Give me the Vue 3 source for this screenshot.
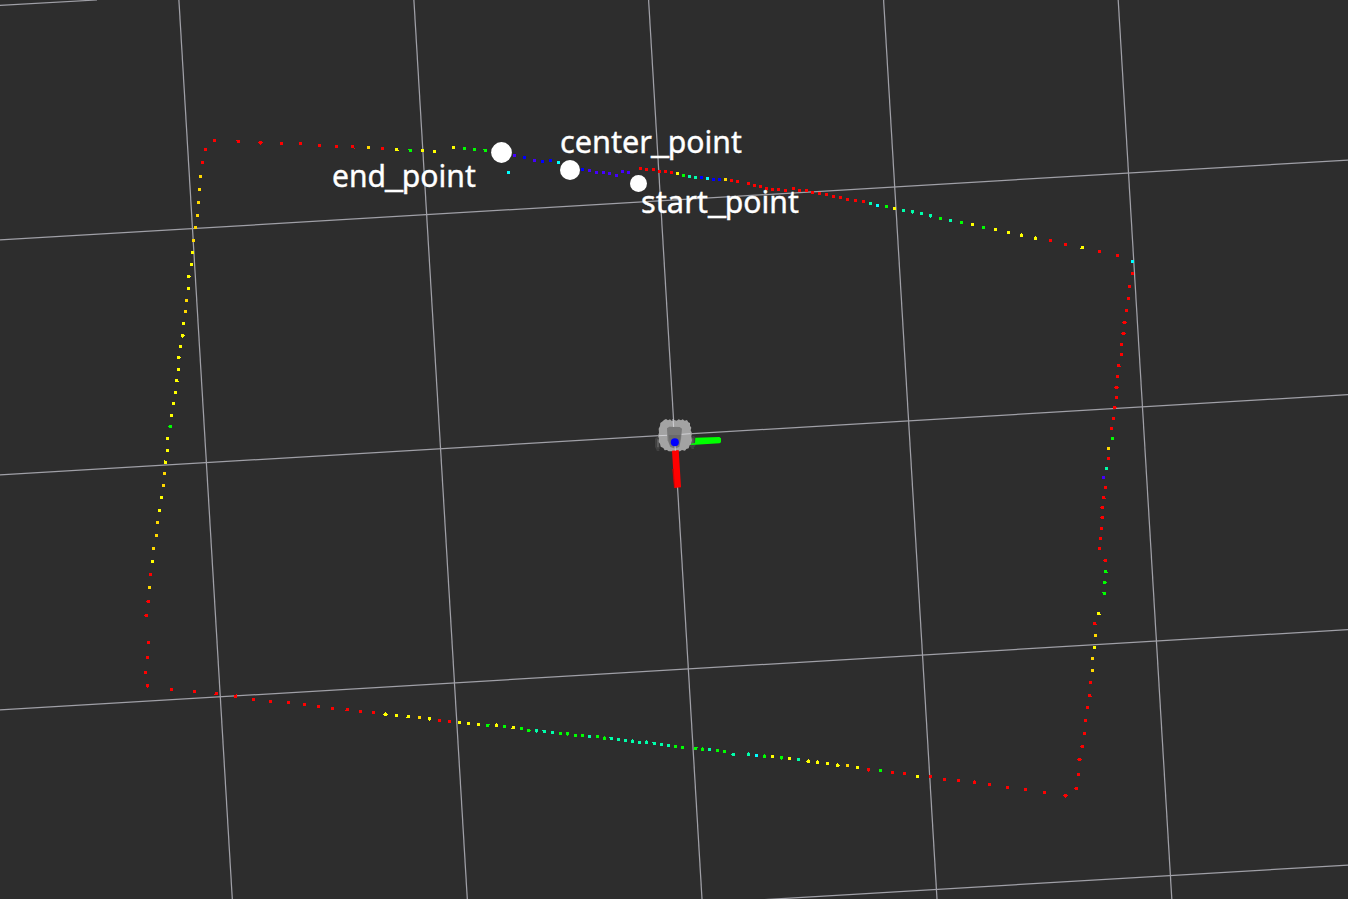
<script setup>
const scan = {
  red: '214,140 205,149 202,162 238,141 260,142 281,143 300,143 319,145 336,146 352,146 382,148 640,168 646,169 653,169 659,171 665,171 671,172 731,180 737,181 748,183 754,185 760,186 766,188 772,189 778,189 785,190 793,188 799,190 806,190 812,192 819,193 826,194 833,196 840,197 847,199 855,200 863,201 1050,240 1065,244 1099,251 1117,255 1132,273 1129,286 1128,298 1126,310 1124,322 1123,333 1121,344 1121,354 1118,365 1117,376 1116,387 1116,397 1114,407 1113,418 1111,428 1108,458 1105,487 1103,497 1102,507 1102,517 1101,528 1100,538 1099,548 1105,560 1094,623 1090,682 1089,695 1087,707 1085,720 1084,733 1082,746 1079,759 1078,774 1076,788 1065,795 1044,792 150,574 148,601 146,615 148,642 147,657 145,672 147,685 171,689 194,691 216,693 235,696 253,699 270,701 288,702 304,704 318,706 332,708 347,709 360,711 373,712 439,720 449,721 868,769 892,772 904,773 930,776 944,779 958,780 974,782 989,784 1007,787 1025,789',
  amber: '200,176 199,189 198,202 197,215 195,227 193,240 186,300 185,311 725,179 1108,448 1095,635 1092,658 1092,670 164,473 163,485 157,522 156,535 153,548 149,587 419,717 847,765 368,147',
  yellow: '192,252 191,264 188,276 188,288 183,323 182,335 180,346 178,357 178,369 176,380 175,392 173,403 171,415 167,438 167,450 165,462 161,497 159,510 152,561 396,149 422,150 434,151 453,147 677,173 894,208 972,224 995,229 1008,232 1021,235 1035,238 1082,247 1098,613 1094,647 385,714 396,715 408,716 429,718 459,722 468,723 478,724 496,725 513,727 772,756 789,758 808,761 817,762 827,763 837,765 857,767 917,776',
  green: '410,150 464,148 474,149 485,150 683,175 886,206 940,218 961,222 983,227 1112,438 1105,571 1104,582 1104,593 170,426 487,725 504,726 521,728 528,730 560,733 567,733 575,735 582,735 597,736 604,738 675,746 682,747 695,748 702,749 717,750 724,751 764,756 781,757 880,770',
  teal: '689,176 695,177 870,203 903,210 912,211 921,213 930,215 950,220 1106,468 536,730 544,731 552,732 589,736 611,738 618,739 625,740 632,741 639,742 646,742 654,743 661,744 668,745 709,749 733,754 748,754 798,759',
  cyan: '558,162 508,172 707,178 877,205 1132,261 756,755',
  blue: '524,157 542,161 550,160 582,169 701,177 713,179 719,179',
  violet: '514,155 534,160 589,170 596,172 603,172 609,173 616,175 622,171 628,172 1103,477'
}
// pixels beside a point where two overlapping echoes widen it
const echoes = {
  red: '236,140 258,142 262,142 260,144 354,148 206,148 1122,322 1126,322 1121,333 1125,333 1120,366 1114,387 1118,387 1116,407 1105,498 1100,507 1100,517 1103,560 1096,624 1091,696 1086,721 1080,746 1077,759 1081,759 1074,788 1063,795 1067,795 1065,797 146,601 144,615 147,687 214,694 236,694 345,710 974,780 868,771',
  yellow: '190,276 184,335 182,337 180,357 178,381 164,460 398,150 383,714 387,714 385,712 406,717 429,720 496,723 511,728 806,761 808,759 817,760 837,763 839,765 1021,233 1035,236 1080,248 1100,614',
  green: '408,149 483,149 168,426 1107,572 1106,582 1102,592 489,724 530,730 567,735 604,736 697,747 702,747 764,754 781,759',
  teal: '912,213 930,217 536,732 542,730 609,737 632,739 646,740 652,742 731,754 748,752'
}
const cells = (list, size) => list.split(' ').map((p) => {
  const [x, y] = p.split(',')
  const o = size === 3 ? 1 : 0
  return `M${x - o} ${y - o}h${size}v${size}h-${size}z`
}).join('')
const layers = Object.entries(scan).map(([name, list]) => ({
  name,
  d: cells(list, 3) + (echoes[name] ? cells(echoes[name], 1) : '')
}))
const grid = [
  [0, 5.3, 97, 0], [0, 240, 1348, 160], [0, 475, 1348, 394.6], [0, 710, 1348, 629.6], [0, 945, 1348, 865],
  [178.9, 0, 232.3, 899], [413.9, 0, 467.3, 899], [648.6, 0, 702, 899], [883.6, 0, 937, 899], [1118.2, 0, 1171.8, 899]
]
const labels = [
  { y: 187, parts: [['end', 332, 54], ['_', 385, 18], ['point', 401.8, 74]] },
  { y: 153.3, parts: [['center', 560, 92], ['_', 651, 18], ['point', 667.8, 74]] },
  { y: 213, parts: [['start', 641, 67], ['_', 708, 18], ['point', 724.8, 74]] }
]
</script>

<template>
  <main class="viewport">
    <svg class="scene" width="1348" height="899" viewBox="0 0 1348 899">
      <g class="grid">
        <line v-for="(l, i) in grid" :key="i" :x1="l[0]" :y1="l[1]" :x2="l[2]" :y2="l[3]" />
      </g>
      <g shape-rendering="crispEdges">
        <path v-for="l in layers" :key="l.name" :class="l.name" :d="l.d" />
      </g>
      <g transform="translate(640 405) scale(.33333)">
        <path class="wheel" d="M45 101l7-6 7 3v34l-10 2-4-9zM151 96l11-4 5 8-1 24-10 5-6-4z" />
        <path class="hub" d="M51 103h6v24h-6zM155 100h6v20h-6z" />
        <path class="wheel" d="M50 133h8v5h-8zM154 127h8v5h-8z" />
        <path class="green" d="M145 117l20-3 1-16 72-2 5 4v12l-4 3-73 4-23 1z" />
        <path class="body" d="M72 45l6-3 6 4 6-3 6 5 7-3 7 2 6-4 7 3 5-3 6 4 7-2 4 7 5 2v8l4 6-2 8 4 9-2 9 2 12-3 12-4 3-3 9-7 2-4 5-9-2-6 4H86l-5-4-7 1-4-7-8-4-2-9-4-5 1-10-3-9 3-9-1-12 4-8 1-9 7-5z" />
        <path class="seat" d="M81 70l7-5 31 1 7 5-3 31-5 23-12 6-15-5-8-20z" />
        <path class="shade" d="M86 90h36l-5 29-14 8-13-10z" />
        <path class="axis-line" d="M99 42l2 24M57 92l24-1M125 88l26-2" />
        <path class="red" d="M96 137l20-2 7 112-20 2z" />
        <path class="red-dark" d="M97 192l4-1 4 56h-3z" />
        <path class="axis-line" d="M105 122l1 15" />
        <circle class="origin" cx="104.5" cy="112" r="12" />
      </g>
      <g class="marker">
        <circle cx="501.5" cy="152.5" r="10.4" />
        <circle cx="570" cy="170" r="10" />
        <circle cx="638.5" cy="183.4" r="8.5" />
      </g>
      <text v-for="l in labels" :key="l.y" class="label" :y="l.y"><tspan
        v-for="p in l.parts" :key="p[0]" :x="p[1]" :textLength="p[2]" lengthAdjust="spacingAndGlyphs">{{ p[0] }}</tspan></text>
    </svg>
  </main>
</template>

<style scoped>
.viewport { width: 1348px; height: 899px; background: #2d2d2d; overflow: hidden; }
.scene { display: block; }
.grid { stroke: #a0a0a7; stroke-width: 1.25; }
.red { fill: #ff0000; }
.red-dark { fill: #d00000; }
.amber { fill: #ffd800; }
.yellow { fill: #ffff00; }
.green { fill: #00ff00; }
.teal { fill: #00ffaa; }
.cyan { fill: #00ffff; }
.blue { fill: #0000ff; }
.violet { fill: #4400ff; }
.wheel { fill: #414141; }
.hub { fill: #5c5c5c; }
.body { fill: #a3a3a3; }
.seat { fill: #777777; }
.shade { fill: #6a6a6a; }
.axis-line { fill: none; stroke: #d0d0d4; stroke-width: 3; }
.origin { fill: #0000ff; }
.marker { fill: #ffffff; }
.label { fill: #ffffff; stroke: #ffffff; stroke-width: 0.4px; font: 31px "Noto Sans", "Open Sans", sans-serif; }
</style>

<style>
body { margin: 0; background: #2d2d2d; }
</style>
